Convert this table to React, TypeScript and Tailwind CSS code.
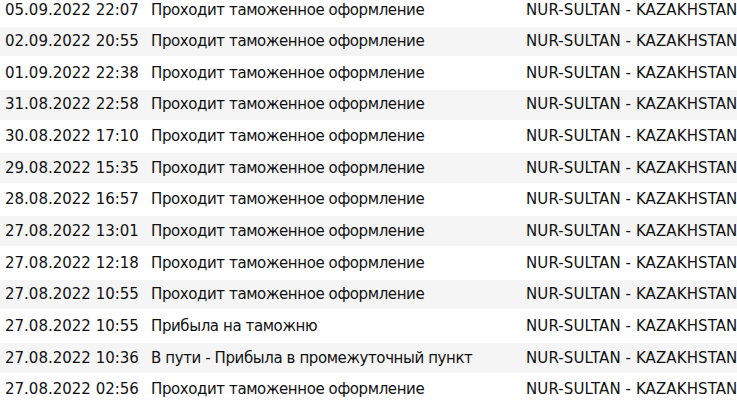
const rows = [
  ["05.09.2022 22:07", "Проходит таможенное оформление"],
  ["02.09.2022 20:55", "Проходит таможенное оформление"],
  ["01.09.2022 22:38", "Проходит таможенное оформление"],
  ["31.08.2022 22:58", "Проходит таможенное оформление"],
  ["30.08.2022 17:10", "Проходит таможенное оформление"],
  ["29.08.2022 15:35", "Проходит таможенное оформление"],
  ["28.08.2022 16:57", "Проходит таможенное оформление"],
  ["27.08.2022 13:01", "Проходит таможенное оформление"],
  ["27.08.2022 12:18", "Проходит таможенное оформление"],
  ["27.08.2022 10:55", "Проходит таможенное оформление"],
  ["27.08.2022 10:55", "Прибыла на таможню"],
  ["27.08.2022 10:36", "В пути - Прибыла в промежуточный пункт"],
  ["27.08.2022 02:56", "Проходит таможенное оформление"],
];

export default function App() {
  return (
    <div className="w-[737px] h-[403px] overflow-hidden bg-white">
      <div
        className="mt-[-5px] flex flex-col gap-[2px] text-[15px] text-[#111]"
        style={{ fontFamily: '"DejaVu Sans", Verdana, sans-serif' }}
      >
        {rows.map(([date, status], i) => (
          <div
            key={i}
            className={
              "grid h-[29.65px] grid-cols-[146px_375px_1fr] items-center whitespace-nowrap " +
              (i % 2 === 1 ? "bg-[#f5f5f5]" : "bg-white")
            }
          >
            <div className="pl-[5px]">{date}</div>
            <div className="pl-[5px] tracking-[-0.4px]">{status}</div>
            <div className="pl-[5px] tracking-[0.1px]">NUR-SULTAN - KAZAKHSTAN</div>
          </div>
        ))}
      </div>
    </div>
  );
}
